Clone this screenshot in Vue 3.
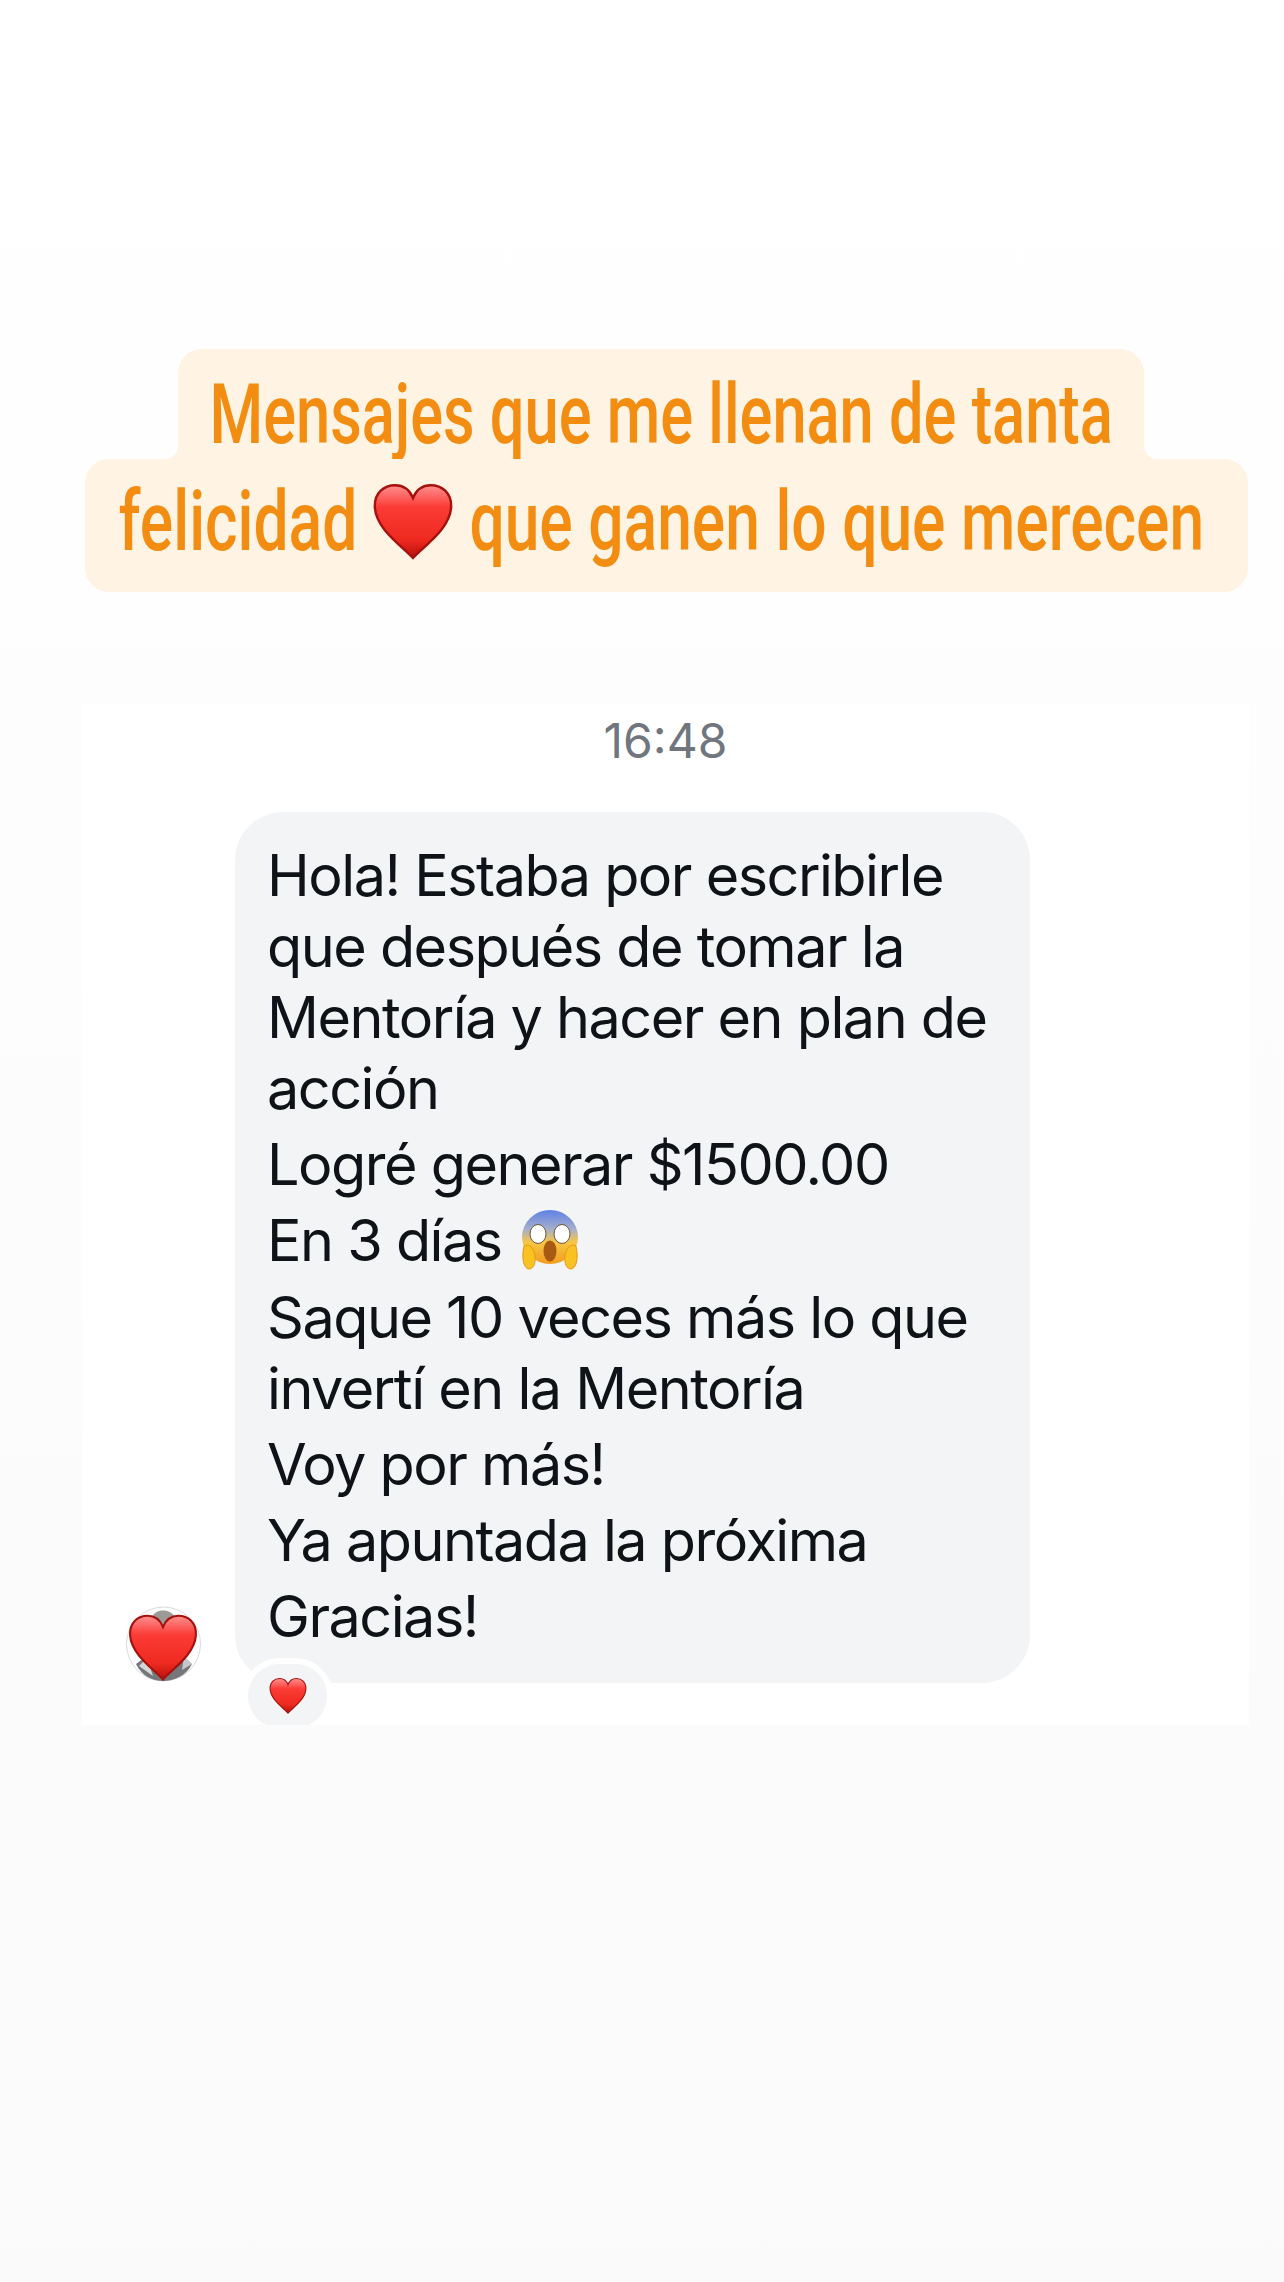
<script setup>
const before = [
  ['Hola! Estaba por escribirle', 'que después de tomar la', 'Mentoría y hacer en plan de', 'acción'],
  ['Logré generar $1500.00'],
]
const after = [
  ['Saque 10 veces más lo que', 'invertí en la Mentoría'],
  ['Voy por más!'],
  ['Ya apuntada la próxima'],
  ['Gracias!'],
]
const heartPath = 'M50 95C38 81 5 60 3 32C2 13 15 4 28 4C38 4 46 10 50 20C54 10 62 4 72 4C85 4 98 13 97 32C95 60 62 81 50 95Z'
</script>

<template>
  <main class="page">
    <svg width="0" height="0" class="defs" aria-hidden="true">
      <defs>
        <linearGradient id="hg" x1="0" y1="0" x2="0" y2="1">
          <stop offset="0" stop-color="#ff9090" />
          <stop offset="0.3" stop-color="#fb3b36" />
          <stop offset="0.75" stop-color="#ee2a20" />
          <stop offset="1" stop-color="#b5100c" />
        </linearGradient>
        <linearGradient id="fg" x1="0" y1="0" x2="0" y2="1">
          <stop offset="0" stop-color="#5f80e6" />
          <stop offset="0.36" stop-color="#a6b0cc" />
          <stop offset="0.6" stop-color="#f9c544" />
          <stop offset="1" stop-color="#f39c1f" />
        </linearGradient>
      </defs>
    </svg>

    <section class="caption">
      <div class="cap-line first"><span class="cap-text one">Mensajes que me llenan de tanta</span></div>
      <div class="cap-line second">
        <span class="cap-text two">felicidad <svg class="cap-heart" viewBox="0 0 100 100" preserveAspectRatio="none"><path :d="heartPath" fill="url(#hg)" stroke="#a5120e" stroke-width="3" /></svg> que ganen lo que merecen</span>
      </div>
    </section>

    <section class="card">
      <div class="time">16:48</div>
      <div class="row">
        <div class="avatar">
          <svg viewBox="0 0 75 76" class="avatar-photo">
            <circle cx="37.5" cy="38" r="37" fill="#fff" stroke="#d9dadc" stroke-width="1" />
            <path d="M26 12C28 2 46 2 49 12L50 24H25Z" fill="#9c9a96" />
            <path d="M10 58L24 48H52L66 58C60 70 48 75 37 75C26 75 16 70 10 58Z" fill="#75777a" />
            <path d="M13 60L21 52L27 70Z" fill="#d5d6d8" />
            <path d="M58 50L66 58L56 64Z" fill="#c6c7c9" />
          </svg>
          <svg viewBox="0 0 100 100" class="avatar-heart"><path :d="heartPath" fill="url(#hg)" stroke="#a5120e" stroke-width="3" /></svg>
        </div>
        <div class="bubble">
          <div class="msg">
            <p v-for="(p, i) in before" :key="i" class="para"><span v-for="l in p" :key="l" class="line">{{ l }}</span></p>
            <p class="para"><span class="line">En 3 días
              <svg class="scream" viewBox="0 0 58 60">
                <ellipse cx="29" cy="27" rx="28" ry="27" fill="url(#fg)" />
                <ellipse cx="17" cy="24" rx="8" ry="9.5" fill="#fff" stroke="#6a5630" stroke-width="1" />
                <ellipse cx="41" cy="24" rx="8" ry="9.5" fill="#fff" stroke="#6a5630" stroke-width="1" />
                <ellipse cx="29" cy="41" rx="6.5" ry="10.5" fill="#a85a12" />
                <path d="M3 36C8 33 13 38 14 46C15 54 12 59 8 59C3 59 0 48 3 36Z" fill="#f9c221" stroke="#e39a14" stroke-width="1" />
                <path d="M55 36C50 33 45 38 44 46C43 54 46 59 50 59C55 59 58 48 55 36Z" fill="#f9c221" stroke="#e39a14" stroke-width="1" />
              </svg>
            </span></p>
            <p v-for="(p, i) in after" :key="'a' + i" class="para"><span v-for="l in p" :key="l" class="line">{{ l }}</span></p>
          </div>
          <div class="reaction">
            <svg viewBox="0 0 100 100" class="reaction-heart"><path :d="heartPath" fill="url(#hg)" stroke="#a5120e" stroke-width="3" /></svg>
          </div>
        </div>
      </div>
    </section>
  </main>
</template>

<style scoped>
.page {
  width: 1284px;
  height: 2282px;
  padding-top: 349px;
  box-sizing: border-box;
  overflow: hidden;
  background: linear-gradient(#ffffff, #fafafa);
  font-family: Inter, "Liberation Sans", sans-serif;
}
.defs { position: absolute; }
.caption {
  display: flex;
  flex-direction: column;
  align-items: flex-start;
  padding-left: 85px;
}
.cap-line {
  position: relative;
  display: flex;
  justify-content: center;
  background: #fff3e3;
}
.first {
  width: 966px;
  height: 110px;
  margin-left: 93px;
  border-radius: 24px 24px 0 0;
}
.first::before,
.first::after {
  content: "";
  position: absolute;
  bottom: 0;
  width: 14px;
  height: 14px;
}
.first::before {
  left: -14px;
  background: radial-gradient(circle at 0 0, transparent 14px, #fff3e3 14.5px);
}
.first::after {
  right: -14px;
  background: radial-gradient(circle at 100% 0, transparent 14px, #fff3e3 14.5px);
}
.second {
  width: 1163px;
  height: 133px;
  border-radius: 24px;
}
.cap-text {
  flex: none;
  white-space: nowrap;
  font-family: Roboto, "Liberation Sans", sans-serif;
  font-weight: 500;
  font-size: 83px;
  color: #f28d12;
}
.one {
  line-height: 100px;
  padding-top: 16px;
  transform: scaleX(0.739);
}
.two {
  line-height: 100px;
  padding-top: 13px;
  padding-right: 13px;
  transform: scaleX(0.751);
}
.cap-heart {
  display: inline-block;
  width: 108px;
  height: 80px;
  vertical-align: -12px;
}
.card {
  width: 1167px;
  height: 1021px;
  margin: 112px 0 0 82px;
  overflow: hidden;
  background: #fff;
}
.time {
  padding-top: 8px;
  text-align: center;
  font-size: 48px;
  line-height: 58px;
  color: #70757e;
}
.row {
  display: flex;
  align-items: flex-end;
  gap: 34px;
  margin-top: 42px;
  padding-left: 44px;
}
.avatar {
  position: relative;
  flex: none;
  width: 75px;
  height: 76px;
  margin-bottom: 1px;
}
.avatar-photo {
  display: block;
  width: 75px;
  height: 76px;
}
.avatar-heart {
  position: absolute;
  left: 2px;
  top: 7px;
  width: 70px;
  height: 70px;
}
.bubble {
  position: relative;
  width: 795px;
  box-sizing: border-box;
  padding: 28px 32px 31px;
  border-radius: 48px;
  background: #f3f4f6;
}
.msg {
  display: flex;
  flex-direction: column;
  gap: 5.2px;
  font-size: 57.5px;
  letter-spacing: -1.5px;
  line-height: 71px;
  color: #0f1318;
}
.para {
  margin: 0;
}
.line {
  display: block;
  white-space: nowrap;
}
.scream {
  display: inline-block;
  width: 58px;
  height: 60px;
  vertical-align: -9px;
  margin-left: 5px;
}
.reaction {
  position: absolute;
  left: 7px;
  bottom: -51px;
  display: flex;
  align-items: center;
  justify-content: center;
  width: 79px;
  height: 64px;
  border: 6px solid #fff;
  border-radius: 40px;
  background: #f3f4f6;
}
.reaction-heart {
  width: 38px;
  height: 38px;
}
</style>
